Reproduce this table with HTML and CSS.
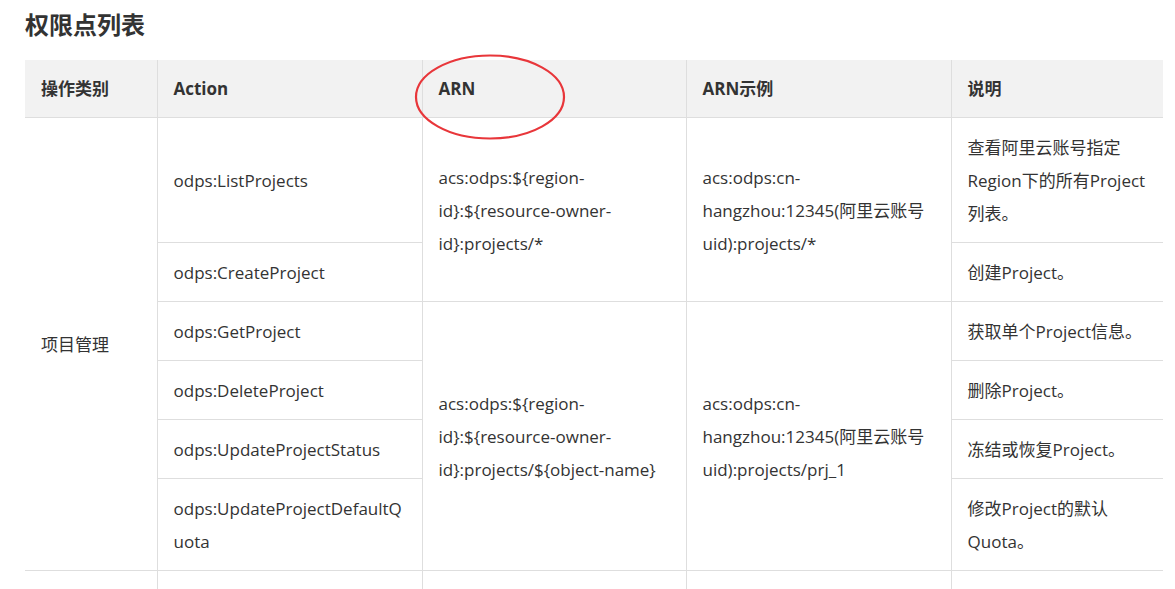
FILE: index.html
```html
<!DOCTYPE html>
<html lang="zh-CN">
<head>
<meta charset="utf-8">
<title>权限点列表</title>
<link rel="stylesheet" href="styles.css">
</head>
<body>
<div class="page">
  <h1 class="title">权限点列表</h1>
  <div class="table-wrap">
    <table class="perm">
      <colgroup>
        <col class="c1"><col class="c2"><col class="c3"><col class="c4"><col class="c5">
      </colgroup>
      <thead>
        <tr>
          <th class="first">操作类别</th>
          <th>Action</th>
          <th>ARN</th>
          <th>ARN示例</th>
          <th>说明</th>
        </tr>
      </thead>
      <tbody>
        <tr>
          <td class="first" rowspan="6">项目管理</td>
          <td>odps:ListProjects</td>
          <td rowspan="2">acs:odps:${region-id}:${resource-owner-id}:projects/*</td>
          <td rowspan="2">acs:odps:cn-hangzhou:12345(阿里云账号uid):projects/*</td>
          <td>查看阿里云账号指定Region下的所有Project列表。</td>
        </tr>
        <tr>
          <td>odps:CreateProject</td>
          <td>创建Project。</td>
        </tr>
        <tr>
          <td>odps:GetProject</td>
          <td rowspan="4">acs:odps:${region-id}:${resource-owner-id}:projects/${object-name}</td>
          <td rowspan="4">acs:odps:cn-hangzhou:12345(阿里云账号uid):projects/prj_1</td>
          <td>获取单个Project信息。</td>
        </tr>
        <tr>
          <td>odps:DeleteProject</td>
          <td>删除Project。</td>
        </tr>
        <tr>
          <td>odps:UpdateProjectStatus</td>
          <td>冻结或恢复Project。</td>
        </tr>
        <tr>
          <td>odps:UpdateProjectDefaultQuota</td>
          <td>修改Project的默认Quota。</td>
        </tr>
        <tr>
          <td class="first">&nbsp;</td>
          <td>&nbsp;</td>
          <td>&nbsp;</td>
          <td>&nbsp;</td>
          <td>&nbsp;</td>
        </tr>
      </tbody>
    </table>
    <svg class="mark" width="156" height="90" viewBox="0 0 156 90" aria-hidden="true">
      <ellipse cx="78" cy="45" rx="74" ry="41.5" fill="none" stroke="#e8363a" stroke-width="2.2"/>
    </svg>
  </div>
</div>
</body>
</html>
```

FILE: styles.css
```css
html, body {
  margin: 0;
  padding: 0;
  background: #fff;
}

body {
  font-family: "Open Sans", "Noto Sans CJK SC", sans-serif;
  color: #333;
}

.page {
  padding: 0 12px 0 25px;
}

.title {
  margin: 0;
  padding-top: 6px;
  font-size: 24px;
  line-height: 36px;
  font-weight: 700;
  color: #333;
  font-family: "Noto Sans CJK SC", sans-serif;
}

.table-wrap {
  position: relative;
  margin-top: 18px;
}

.perm {
  width: 1138px;
  table-layout: fixed;
  border-collapse: collapse;
  font-size: 17px;
  line-height: 33px;
}

.c1 { width: 132px; }
.c2 { width: 265px; }
.c3 { width: 264px; }
.c4 { width: 265px; }
.c5 { width: 212px; }

.perm th,
.perm td {
  padding: 13px 16px 12px;
  border: 1px solid #dedede;
  text-align: left;
  vertical-align: middle;
  overflow-wrap: break-word;
}

.perm th {
  background: #f2f2f2;
  font-weight: 700;
  padding-top: 12px;
  padding-bottom: 12px;
  border-top: none;
}

.perm th.first,
.perm td.first {
  border-left: none;
}

.perm tr > :last-child {
  border-right: none;
}

.mark {
  position: absolute;
  left: 387px;
  top: -8px;
}
```
